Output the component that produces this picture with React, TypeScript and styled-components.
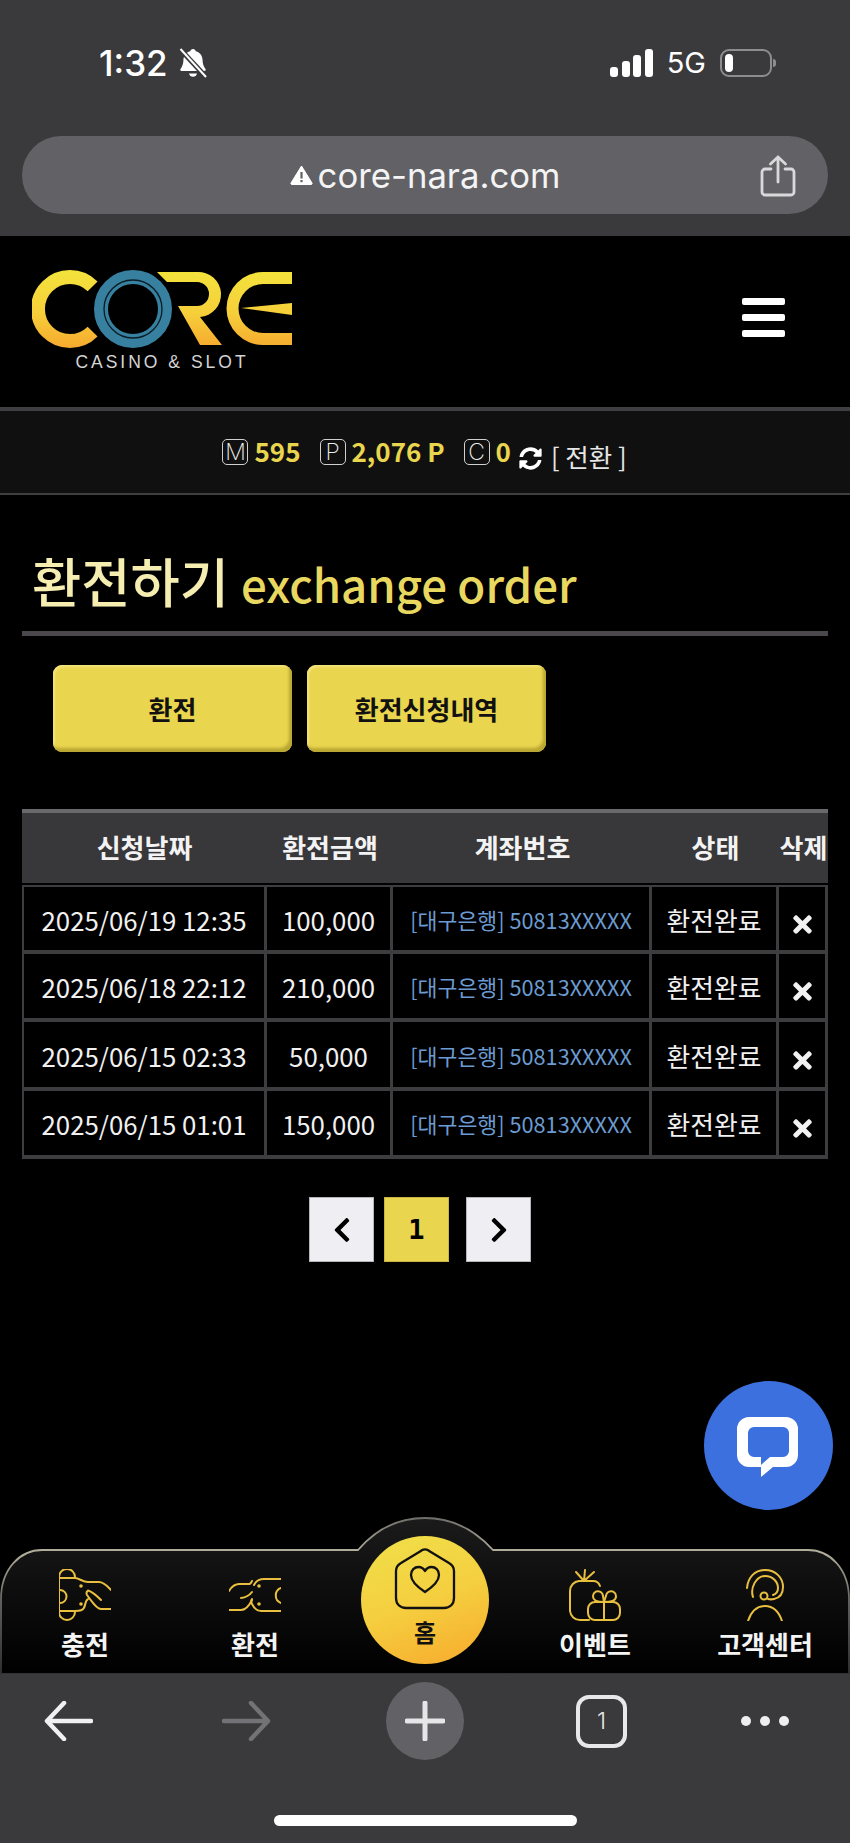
import React from 'react'
import styled, { createGlobalStyle } from 'styled-components'
import { FaSyncAlt, FaTimes, FaChevronLeft, FaChevronRight } from 'react-icons/fa'

const FONT = `"Noto Sans CJK KR", "Noto Sans", sans-serif`

const GlobalStyle = createGlobalStyle`
  html, body { margin: 0; padding: 0; background: #000; }
  * { box-sizing: border-box; }
`

const rows = [
  { date: '2025/06/19 12:35', amount: '100,000' },
  { date: '2025/06/18 22:12', amount: '210,000' },
  { date: '2025/06/15 02:33', amount: '50,000' },
  { date: '2025/06/15 01:01', amount: '150,000' },
]

const App = () => {
  return (
    <Page>
      <GlobalStyle />
      <TopChrome>
        <StatusBar>
          <TimeGroup>
            <Time>1:32</Time>
            <BellOff />
          </TimeGroup>
          <StatusRight>
            <SignalBars />
            <Network>5G</Network>
            <Battery />
          </StatusRight>
        </StatusBar>
        <AddressBar>
          <UrlGroup>
            <WarnIcon />
            <Url>core-nara.com</Url>
          </UrlGroup>
          <ShareSlot>
            <ShareIcon />
          </ShareSlot>
        </AddressBar>
      </TopChrome>

      <Header>
        <LogoBox>
          <Logo />
          <Tagline>CASINO &amp; SLOT</Tagline>
        </LogoBox>
        <Burger>
          <span />
          <span />
          <span />
        </Burger>
      </Header>

      <PointsBar>
        <Badge>M</Badge>
        <Amount>595</Amount>
        <Badge $gap>P</Badge>
        <Amount>2,076 P</Amount>
        <Badge $gap>C</Badge>
        <Amount>0</Amount>
        <SyncWrap>
          <FaSyncAlt size={23} />
        </SyncWrap>
        <Convert>[ 전환 ]</Convert>
      </PointsBar>

      <Main>
        <Title>
          환전하기 <TitleEn>exchange order</TitleEn>
        </Title>
        <Buttons>
          <YellowButton>환전</YellowButton>
          <YellowButton>환전신청내역</YellowButton>
        </Buttons>

        <Table>
          <colgroup>
            <col style={{ width: 245 }} />
            <col style={{ width: 126 }} />
            <col style={{ width: 259 }} />
            <col style={{ width: 127 }} />
            <col style={{ width: 49 }} />
          </colgroup>
          <thead>
            <tr>
              <Th>신청날짜</Th>
              <Th>환전금액</Th>
              <Th>계좌번호</Th>
              <Th>상태</Th>
              <Th>삭제</Th>
            </tr>
          </thead>
          <tbody>
            {rows.map((row) => (
              <tr key={row.date}>
                <Td>{row.date}</Td>
                <Td>{row.amount}</Td>
                <AccountTd>[대구은행] 50813XXXXX</AccountTd>
                <Td>환전완료</Td>
                <Td>
                  <FaTimes size={27} />
                </Td>
              </tr>
            ))}
          </tbody>
        </Table>

        <Pager>
          <PageBtn>
            <FaChevronLeft size={28} />
          </PageBtn>
          <PageBtn $active>1</PageBtn>
          <PageBtn>
            <FaChevronRight size={28} />
          </PageBtn>
        </Pager>
      </Main>

      <ChatButton>
        <ChatIcon />
      </ChatButton>

      <BottomNav>
        <NavShape />
        <NavItem>
          <ChargeIcon />
          <NavLabel>충전</NavLabel>
        </NavItem>
        <NavItem>
          <ExchangeIcon />
          <NavLabel>환전</NavLabel>
        </NavItem>
        <HomeCircle>
          <HomeIcon />
          <HomeLabel>홈</HomeLabel>
        </HomeCircle>
        <NavItem>
          <GiftIcon />
          <NavLabel>이벤트</NavLabel>
        </NavItem>
        <NavItem>
          <AgentIcon />
          <NavLabel>고객센터</NavLabel>
        </NavItem>
      </BottomNav>

      <BottomChrome>
        <ToolRow>
          <ArrowIcon color="#f0eff1" />
          <ArrowIcon color="#737276" flip />
          <PlusCircle>
            <PlusIcon />
          </PlusCircle>
          <TabsBox>1</TabsBox>
          <Dots>
            <i />
            <i />
            <i />
          </Dots>
        </ToolRow>
        <HomeIndicator />
      </BottomChrome>
    </Page>
  )
}

export default App

const BellOff = () => (
  <svg width="30" height="30" viewBox="0 0 30 30" fill="#fff">
    <path d="M15 1c1.6 0 2.6 1 2.8 2.3 4.4 1.2 6.6 4.6 6.8 9 .1 3.400.8 6 2.900 8.600.6.800.1 2-1 2H3.500c-1.100 0-1.600-1.200-1-2 2-2.600 2.800-5.200 2.900-8.600.2-4.400 2.400-7.800 6.800-9C12.400 2 13.400 1 15 1z" />
    <path d="M11 25.500h8c-.4 2-2 3.300-4 3.300s-3.600-1.300-4-3.300z" />
    <path d="M2 1l26 28" stroke="#3a393b" strokeWidth="5" />
    <path d="M2.500 1l25.500 28" stroke="#fff" strokeWidth="2" />
  </svg>
)

const SignalBars = () => (
  <svg width="43" height="28" viewBox="0 0 43 28" fill="#fff">
    <rect x="0" y="18" width="8" height="10" rx="3" />
    <rect x="12" y="12" width="8" height="16" rx="3" />
    <rect x="23" y="6" width="8" height="22" rx="3" />
    <rect x="35" y="0" width="8" height="28" rx="3" />
  </svg>
)

const WarnIcon = () => (
  <svg width="23" height="20" viewBox="0 0 23 20">
    <path d="M11.500 1L22 18a1 1 0 0 1-1 1.500H2A1 1 0 0 1 1 18z" fill="#fff" stroke="#fff" strokeLinejoin="round" />
    <rect x="10.400" y="7" width="2.200" height="6.500" fill="#626266" />
    <rect x="10.400" y="15" width="2.200" height="2.200" fill="#626266" />
  </svg>
)

const ShareIcon = () => (
  <svg width="36" height="42" viewBox="0 0 36 42" fill="none" stroke="#d9d9db" strokeWidth="2.800" strokeLinecap="round" strokeLinejoin="round">
    <path d="M11 14H5a3 3 0 0 0-3 3v20a3 3 0 0 0 3 3h26a3 3 0 0 0 3-3V17a3 3 0 0 0-3-3h-6" />
    <path d="M18 27V2M10.500 9L18 2l7.500 7" />
  </svg>
)

const Logo = () => (
  <svg width="260" height="78" viewBox="0 0 260 78">
    <defs>
      <linearGradient id="logoGold" gradientUnits="userSpaceOnUse" x1="0" y1="0" x2="0" y2="78">
        <stop offset="0" stopColor="#f3e33c" />
        <stop offset="0.55" stopColor="#f6cf3a" />
        <stop offset="1" stopColor="#f6a92e" />
      </linearGradient>
    </defs>
    <path d="M60.600 16.400A32 32 0 1 0 60.600 61.600" fill="none" stroke="url(#logoGold)" strokeWidth="14" />
    <circle cx="101" cy="39" r="32" fill="#000" stroke="#37809f" strokeWidth="14" />
    <circle cx="101" cy="39" r="29" fill="none" stroke="#0a1c26" strokeWidth="1.300" />
    <path
      fill="url(#logoGold)"
      d="M125 2H165A22.500 22.500 0 0 1 168 47L190 75H168L146 36H165A12 12 0 0 0 165 12H135Z"
    />
    <path
      fill="url(#logoGold)"
      d="M260 2H231A36.500 36.500 0 0 0 231 75H260V63H231A24.500 24.500 0 0 1 231 14H260Z"
    />
    <path fill="url(#logoGold)" d="M209 38L260 33V45Z" />
  </svg>
)

const ChatIcon = () => (
  <svg width="129" height="129" viewBox="0 0 129 129">
    <circle cx="64.500" cy="64.500" r="64.500" fill="#3b70de" />
    <path
      fill="#fff"
      fillRule="evenodd"
      d="M45 36H82a12 12 0 0 1 12 12V74a12 12 0 0 1-12 12H69L57 96V86H45a12 12 0 0 1-12-12V48a12 12 0 0 1 12-12ZM50 46a6 6 0 0 0-6 6V70a6 6 0 0 0 6 6H57V84L66 76H79a6 6 0 0 0 6-6V52a6 6 0 0 0-6-6Z"
    />
  </svg>
)

const NavShape = () => (
  <ShapeSvg width="850" height="157" viewBox="0 0 850 157">
    <defs>
      <linearGradient id="navFill" x1="0" y1="0" x2="0" y2="1">
        <stop offset="0" stopColor="#1b1b1b" />
        <stop offset="0.4" stopColor="#0f0f0f" />
        <stop offset="1" stopColor="#000" />
      </linearGradient>
      <linearGradient id="navLine" x1="0" y1="0" x2="0" y2="1">
        <stop offset="0" stopColor="#6f6e69" />
        <stop offset="0.22" stopColor="#b4b09c" />
        <stop offset="0.5" stopColor="#6d6c68" />
        <stop offset="1" stopColor="#333" />
      </linearGradient>
    </defs>
    <path
      d="M1 157V82C1 52 20 33 42 33H358C376 12 398 1 425 1S474 12 493 33H808C830 33 849 52 849 82V157Z"
      fill="url(#navFill)"
      stroke="url(#navLine)"
      strokeWidth="1.800"
    />
  </ShapeSvg>
)

const ChargeIcon = () => (
  <NavSvg width="52" height="52" viewBox="0 0 52 52">
    <path d="M16 9V8A8 8 0 0 0 0 8V43A8 8 0 0 0 16 43V42M0 9H16C18 9 20 10 22 11C25 12.500 27 13 29 13H40C45 13 48 17 52 21" />
    <path d="M0 42H16C20 42 25 42 26 36C26.500 33 27.500 31 29 30M52 40H42C38 40 33 33 28 26C27 24 27 23 29 21.500M29 21.500C34 23 39 28 42 31" />
    <path d="M1 21A6.500 6.500 0 0 1 1 34" />
    <circle cx="22" cy="17" r="1.800" fill="#e8bf3f" stroke="none" />
    <circle cx="22" cy="35" r="1.800" fill="#e8bf3f" stroke="none" />
  </NavSvg>
)

const ExchangeIcon = () => (
  <NavSvg width="52" height="52" viewBox="0 -9 52 52">
    <path d="M52 1H35C30 1 27 3 25 7M52 33H32C27 33 25 30 23 26C22 24 21.500 23 23 21" />
    <path d="M0 13C3 8 6 6 10 6H19C21 6 21.500 6 23 3" />
    <path d="M0 32H12C17 32 20 28 23 22M12 20C16 19.500 20 18 23 14" />
    <path d="M52 10A8 8 0 0 0 52 25" />
    <circle cx="30" cy="8" r="1.800" fill="#e8bf3f" stroke="none" />
    <circle cx="30" cy="26" r="1.800" fill="#e8bf3f" stroke="none" />
  </NavSvg>
)

const GiftIcon = () => (
  <NavSvg width="52" height="52" viewBox="0 0 52 52">
    <path d="M31 17C30 14 28 12 24 12H10A10 10 0 0 0 1 22V42A10 10 0 0 0 11 51H20" />
    <path d="M15 12L7 3M15 12L16 1M15 12L25 3" />
    <rect x="19" y="33" width="32" height="18" rx="7" />
    <path d="M35 33V51" />
    <path d="M35 33C30 33 24 32 24 27.500A5 5 0 0 1 34 27L35 33C40 33 47 32 47 27.500A5 5 0 0 0 37 27L35 33" />
  </NavSvg>
)

const AgentIcon = () => (
  <NavSvg width="40" height="52" viewBox="0 0 40 52">
    <path d="M2 19C3 8 10 1 20 1C31 1 38 9 38 18C38 25 34 29 29 30C27 30.500 25 30.500 23 30" />
    <path d="M8 28C5 19 11 7 20 7C28 7 33 13 33 19C33 22 31 25 28 26" />
    <circle cx="19" cy="27" r="3.500" />
    <path d="M3 52C6 43 12 37 20 37C28 37 34 43 37 52" />
  </NavSvg>
)

const HomeIcon = () => (
  <svg width="62" height="62" viewBox="0 0 62 62" fill="none" stroke="#111" strokeWidth="2.300" strokeLinejoin="round">
    <path d="M26 3.500C29 1 33 1 36 3.500L55 15C58.500 17 60 19.500 60 23V50C60 56 56 60 50 60H12C6 60 2 56 2 50V23C2 19.500 3.500 17 7 15Z" />
    <path d="M31 44C25 40 17 34 17 27C17 22 20.500 19 24.500 19C27.500 19 29.700 20.700 31 23C32.300 20.700 34.500 19 37.500 19C41.500 19 45 22 45 27C45 34 37 40 31 44Z" />
  </svg>
)

const ArrowIcon = ({ color, flip }: { color: string; flip?: boolean }) => (
  <ArrowSvg $flip={flip} width="49" height="40" viewBox="0 0 49 40" fill="none" stroke={color} strokeWidth="4.500" strokeLinecap="round" strokeLinejoin="round">
    <path d="M47 20H3M20 2L3 20L20 38" />
  </ArrowSvg>
)

const PlusIcon = () => (
  <svg width="40" height="40" viewBox="0 0 40 40" stroke="#e6e5e8" strokeWidth="5" strokeLinecap="round">
    <path d="M20 2V38M2 20H38" />
  </svg>
)

const Page = styled.div`
  position: relative;
  display: flex;
  flex-direction: column;
  width: 850px;
  height: 1843px;
  background: #000;
  overflow: hidden;
  font-family: ${FONT};
  color: #fff;
`
const TopChrome = styled.div`
  height: 236px;
  background: #3a393b;
  padding: 48px 22px 0;
`
const StatusBar = styled.div`
  display: flex;
  justify-content: space-between;
  align-items: center;
  height: 30px;
  padding: 0 56px 0 77px;
`
const TimeGroup = styled.div`
  display: flex;
  align-items: center;
  gap: 10px;
`
const Time = styled.span`
  font-family: Inter, "Liberation Sans", sans-serif;
  font-size: 35px;
  font-weight: 500;
  line-height: 30px;
`
const StatusRight = styled.div`
  display: flex;
  align-items: center;
  gap: 14px;
`
const Network = styled.span`
  font-family: Inter, "Liberation Sans", sans-serif;
  font-size: 29px;
  font-weight: 400;
  line-height: 30px;
`
const Battery = styled.div`
  position: relative;
  width: 52px;
  height: 28px;
  border: 2px solid #8d8d8f;
  border-radius: 9px;
  &::before {
    content: '';
    position: absolute;
    left: 3px;
    top: 3px;
    bottom: 3px;
    width: 8px;
    border-radius: 4px;
    background: #fff;
  }
  &::after {
    content: '';
    position: absolute;
    right: -6px;
    top: 8px;
    width: 3px;
    height: 8px;
    border-radius: 0 3px 3px 0;
    background: #8d8d8f;
  }
`
const AddressBar = styled.div`
  position: relative;
  display: flex;
  align-items: center;
  justify-content: center;
  height: 78px;
  margin-top: 58px;
  border-radius: 39px;
  background: #626266;
`
const UrlGroup = styled.div`
  display: flex;
  align-items: center;
  gap: 5px;
`
const Url = styled.span`
  font-family: Inter, "Liberation Sans", sans-serif;
  font-size: 34.700px;
  line-height: 40px;
  color: #f4f4f5;
`
const ShareSlot = styled.div`
  position: absolute;
  right: 32px;
  top: 19px;
  line-height: 0;
`
const Header = styled.div`
  display: flex;
  align-items: flex-start;
  justify-content: space-between;
  height: 171px;
  padding: 34px 65px 0 32px;
  background: #000;
`
const LogoBox = styled.div`
  display: flex;
  flex-direction: column;
  align-items: center;
  svg { display: block; }
`
const Tagline = styled.div`
  margin-top: 4px;
  font-family: "Liberation Sans", sans-serif;
  font-size: 17.500px;
  line-height: 20px;
  letter-spacing: 3px;
  color: #d4d4d4;
`
const Burger = styled.div`
  display: flex;
  flex-direction: column;
  gap: 9px;
  margin-top: 28px;
  span {
    display: block;
    width: 43px;
    height: 7px;
    border-radius: 2px;
    background: #fff;
  }
`
const PointsBar = styled.div`
  display: flex;
  align-items: center;
  justify-content: center;
  height: 88px;
  padding-right: 1px;
  background: #101010;
  border-top: 4px solid #3f3f41;
  border-bottom: 2px solid #3f3f41;
`
const Badge = styled.span<{ $gap?: boolean }>`
  display: flex;
  align-items: center;
  justify-content: center;
  width: 26px;
  height: 26px;
  margin: 0 6px 0 ${(p) => (p.$gap ? '19px' : '0')};
  border: 1px solid #d0d0d0;
  border-radius: 5px;
  font-family: Inter, sans-serif;
  font-size: 23px;
  font-weight: 200;
  color: #ececec;
`
const Amount = styled.span`
  margin-top: -2px;
  font-size: 26px;
  font-weight: 700;
  line-height: 30px;
  color: #e9d54e;
`
const SyncWrap = styled.span`
  display: flex;
  margin: 13px 9px 0 8px;
`
const Convert = styled.span`
  margin-top: 8px;
  font-size: 25.500px;
  line-height: 30px;
  color: #e6e6e6;
`
const Main = styled.main`
  flex: 1;
  padding: 0 22px;
  min-height: 0;
`
const Title = styled.h1`
  height: 141px;
  margin: 0;
  padding: 50px 0 0 10px;
  border-bottom: 5px solid #4a484c;
  font-size: 53.500px;
  font-weight: 500;
  line-height: 70px;
  color: #f5eeb0;
`
const TitleEn = styled.span`
  font-size: 45.600px;
  color: #e9d860;
`
const Buttons = styled.div`
  display: flex;
  gap: 15px;
  margin: 29px 0 0 31px;
`
const YellowButton = styled.button`
  width: 239px;
  height: 87px;
  padding: 0;
  border: 0;
  border-radius: 9px;
  background: #e9d54e;
  box-shadow: inset -3px -4px 3px #b9a733, inset 2px 2px 2px #f3e27a;
  font-family: ${FONT};
  font-size: 26px;
  font-weight: 700;
  color: #111;
`
const Table = styled.table`
  width: 806px;
  margin-top: 57px;
  border-collapse: separate;
  border-spacing: 0;
  table-layout: fixed;
`
const Th = styled.th`
  height: 76px;
  padding: 0 0 3px;
  border-top: 4px solid #69686b;
  border-bottom: 2px solid #000;
  background: #38373a;
  font-size: 26px;
  font-weight: 700;
  text-align: center;
  white-space: nowrap;
  color: #f3f3f3;
`
const Td = styled.td`
  height: 68.500px;
  padding: 2px 0 0;
  border-style: solid;
  border-color: #3d3c3f;
  border-width: 0 3px 4px 0;
  background: #000;
  font-size: 25.800px;
  font-weight: 400;
  text-align: center;
  white-space: nowrap;
  color: #f1f1f1;
  svg { vertical-align: -7px; }
  tr > &:first-child { border-left-width: 2px; }
  tbody tr:first-child & { border-top-width: 2px; }
`
const AccountTd = styled(Td)`
  font-size: 21.700px;
  color: #6b9bd0;
`
const Pager = styled.div`
  display: flex;
  justify-content: center;
  gap: 10px;
  margin-top: 38px;
  padding-right: 10px;
`
const PageBtn = styled.div<{ $active?: boolean }>`
  display: flex;
  align-items: center;
  justify-content: center;
  width: 65px;
  height: 65px;
  margin-right: ${(p) => (p.$active ? '7px' : '0')};
  background: ${(p) => (p.$active ? '#e9d54e' : '#efeef2')};
  border: 1px solid ${(p) => (p.$active ? '#c8b545' : '#b5b4b8')};
  font-family: "DejaVu Sans Mono", monospace;
  font-size: 27px;
  font-weight: 700;
  color: #000;
`
const ChatButton = styled.div`
  position: absolute;
  right: 17px;
  bottom: 333px;
  width: 129px;
  height: 129px;
  line-height: 0;
`
const BottomNav = styled.nav`
  position: relative;
  display: grid;
  grid-template-columns: repeat(5, 170px);
  height: 124px;
`
const ShapeSvg = styled.svg`
  position: absolute;
  left: 0;
  top: -33px;
`
const NavItem = styled.div`
  position: relative;
  display: flex;
  flex-direction: column;
  align-items: center;
  height: 124px;
  padding-top: 19px;
`
const NavSvg = styled.svg`
  display: block;
  flex: none;
  fill: none;
  stroke: #e8bf3f;
  stroke-width: 2;
  stroke-linecap: round;
  stroke-linejoin: round;
`
const NavLabel = styled.span`
  margin-top: 5px;
  font-size: 26px;
  font-weight: 700;
  line-height: 36px;
  color: #f4f4f4;
  white-space: nowrap;
`
const HomeCircle = styled.div`
  position: relative;
  display: flex;
  flex-direction: column;
  align-items: center;
  justify-self: center;
  width: 128px;
  height: 128px;
  margin-top: -14px;
  padding-top: 12px;
  border-radius: 50%;
  background: linear-gradient(160deg, #efe04a 0%, #f5cf3f 50%, #f7a92c 100%);
  svg { display: block; flex: none; }
`
const HomeLabel = styled.span`
  margin-top: 7px;
  font-size: 24px;
  font-weight: 700;
  line-height: 30px;
  color: #111;
`
const BottomChrome = styled.div`
  position: relative;
  display: flex;
  flex-direction: column;
  align-items: center;
  height: 169px;
  background: #3a393b;
`
const ToolRow = styled.div`
  display: flex;
  align-items: center;
  align-self: stretch;
  gap: 114px;
  height: 78px;
  margin-top: 8px;
  padding-left: 44px;
`
const ArrowSvg = styled.svg<{ $flip?: boolean }>`
  flex: none;
  transform: ${(p) => (p.$flip ? 'scaleX(-1)' : 'none')};
  margin-right: ${(p) => (p.$flip ? '0' : '15px')};
`
const PlusCircle = styled.div`
  display: flex;
  align-items: center;
  justify-content: center;
  width: 78px;
  height: 78px;
  margin: 0 -2px 0 1px;
  border-radius: 50%;
  background: #626266;
`
const TabsBox = styled.div`
  display: flex;
  align-items: center;
  justify-content: center;
  width: 51px;
  height: 53px;
  border: 4px solid #e8e7ea;
  border-radius: 13px;
  font-family: Inter, sans-serif;
  font-size: 23px;
  font-weight: 300;
  color: #e8e7ea;
`
const Dots = styled.div`
  display: flex;
  gap: 9px;
  i {
    display: block;
    width: 10px;
    height: 10px;
    border-radius: 50%;
    background: #eeedf0;
  }
`
const HomeIndicator = styled.div`
  width: 303px;
  height: 11px;
  margin-top: 55px;
  border-radius: 6px;
  background: #fff;
`
